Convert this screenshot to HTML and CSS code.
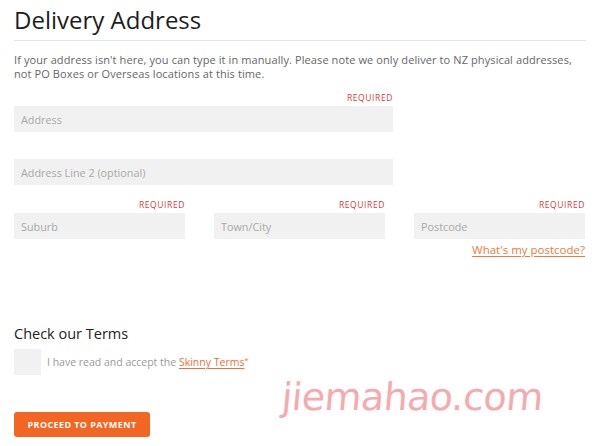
FILE: index.html
```html
<!DOCTYPE html>
<html lang="en">
<head>
<meta charset="utf-8">
<title>Delivery Address</title>
<link rel="stylesheet" href="styles.css">
</head>
<body>
<main class="page">
  <h1 class="title">Delivery Address</h1>
  <p class="intro">If your address isn't here, you can type it in manually. Please note we only deliver to NZ physical addresses, not PO Boxes or Overseas locations at this time.</p>

  <div class="field field-wide">
    <span class="req">REQUIRED</span>
    <input class="input" type="text" placeholder="Address">
  </div>

  <div class="field field-wide field-2">
    <span class="req"></span>
    <input class="input" type="text" placeholder="Address Line 2 (optional)">
  </div>

  <div class="row">
    <div class="field">
      <span class="req">REQUIRED</span>
      <input class="input" type="text" placeholder="Suburb">
    </div>
    <div class="field">
      <span class="req">REQUIRED</span>
      <input class="input" type="text" placeholder="Town/City">
    </div>
    <div class="field">
      <span class="req">REQUIRED</span>
      <input class="input" type="text" placeholder="Postcode">
      <a class="help" href="#">What's my postcode?</a>
    </div>
  </div>

  <h2 class="subtitle">Check our Terms</h2>
  <label class="terms">
    <span class="box"></span>
    <span class="terms-text">I have read and accept the <a href="#" class="link">Skinny Terms</a><sup>*</sup></span>
  </label>

  <button class="btn" type="button">PROCEED TO PAYMENT</button>
</main>
<div class="watermark">jiemahao.com</div>
</body>
</html>
```
FILE: styles.css
```css
html, body {
  margin: 0;
  padding: 0;
  background: #fff;
}
body {
  font-family: "Open Sans", "Liberation Sans", sans-serif;
  color: #333;
  position: relative;
  width: 600px;
  height: 446px;
  overflow: hidden;
}
.page {
  padding: 0 14px;
  display: flex;
  flex-direction: column;
  align-items: flex-start;
}
.title {
  margin: 0;
  width: 572px;
  font-size: 24px;
  font-weight: 400;
  line-height: 30px;
  padding: 5px 0 5px;
  color: #1e1e1e;
  border-bottom: 1px solid #e6e6e6;
}
.intro {
  margin: 12px 0 0;
  font-size: 11px;
  line-height: 14px;
  letter-spacing: 0.1px;
  color: #666;
  width: 568px;
}
.field {
  display: flex;
  flex-direction: column;
  align-items: stretch;
}
.field-wide {
  width: 379px;
  margin-top: 10px;
}
.field-2 {
  margin-top: 12px;
}
.req {
  display: block;
  height: 13px;
  line-height: 13px;
  margin-bottom: 2px;
  text-align: right;
  font-size: 8.5px;
  letter-spacing: 0.6px;
  color: #d23b3b;
}
.input {
  box-sizing: border-box;
  height: 26px;
  border: 0;
  margin: 0;
  padding: 0 7px;
  background: #f1f1f1;
  font-family: inherit;
  font-size: 10.8px;
  color: #333;
  outline: none;
}
.input::placeholder {
  color: #a9a9a9;
}
.row {
  display: grid;
  grid-template-columns: 171px 171px 171px;
  column-gap: 29px;
  margin-top: 13px;
}
.help {
  align-self: flex-end;
  margin-top: 4px;
  font-size: 11.5px;
  line-height: 14px;
  color: #f07a3c;
  text-decoration: underline;
  text-underline-offset: 2px;
}
.subtitle {
  margin: 68px 0 0;
  font-size: 14.5px;
  font-weight: 400;
  line-height: 18px;
  color: #222;
}
.terms {
  margin-top: 6px;
  display: flex;
  align-items: center;
  gap: 6px;
}
.box {
  width: 27px;
  height: 26px;
  background: #f1f1f1;
}
.terms-text {
  font-size: 10.5px;
  color: #999;
}
.link {
  color: #f0703a;
  text-decoration: underline;
  text-underline-offset: 2px;
}
.terms-text sup {
  font-size: 7px;
  color: #f0703a;
  vertical-align: 3px;
}
.btn {
  margin-top: 37px;
  width: 136px;
  height: 25px;
  border: 0;
  border-radius: 3px;
  background: #f26522;
  color: #fff;
  font-family: inherit;
  font-size: 9px;
  font-weight: 700;
  letter-spacing: 0.4px;
  padding: 0;
}
.watermark {
  position: absolute;
  left: 282px;
  top: 378px;
  font-family: "DejaVu Sans", sans-serif;
  font-size: 38px;
  line-height: 38px;
  font-weight: 400;
  color: #f6aaae;
  letter-spacing: -0.6px;
  transform: skewX(-5deg);
}
```
